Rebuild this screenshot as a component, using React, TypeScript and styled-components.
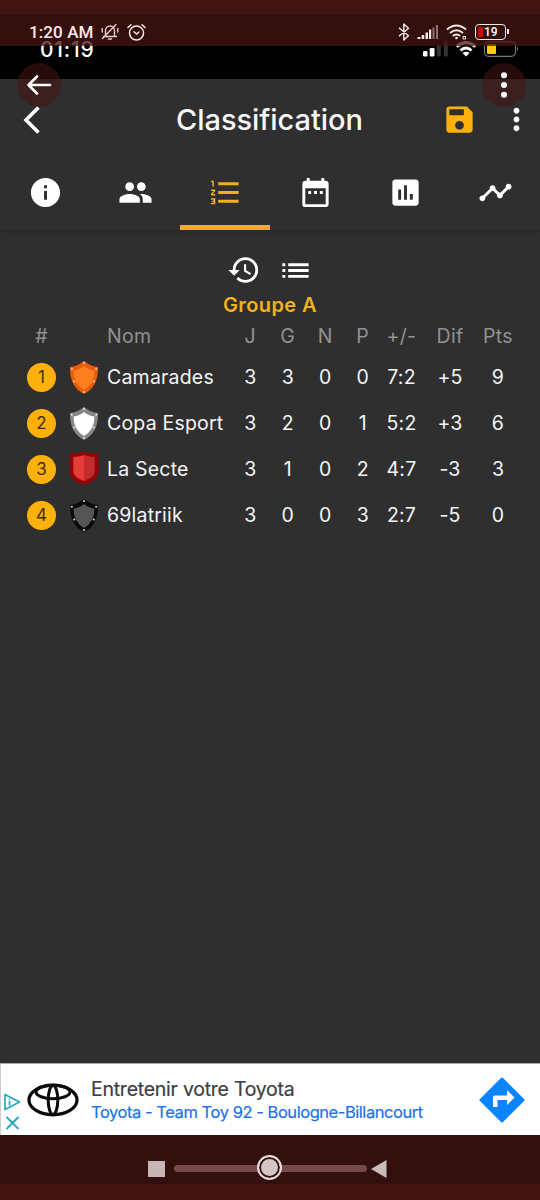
import React from 'react';
import styled, { createGlobalStyle } from 'styled-components';
import {
  MdInfo, MdGroup, MdFormatListNumbered, MdDateRange, MdAssessment, MdTimeline,
  MdHistory, MdList, MdMoreVert,
} from 'react-icons/md';

const amber = '#fdb10a';

const Global = createGlobalStyle`
  * { box-sizing: border-box; }
  body { margin: 0; background: #2f2f2f; }
  svg { display: block; flex: none; }
`;

const Screen = styled.div`
  position: relative;
  display: flex;
  flex-direction: column;
  width: 540px;
  height: 1200px;
  overflow: hidden;
  background: #2f2f2f;
  color: #fff;
  font-family: Inter, 'Liberation Sans', sans-serif;
`;

const InnerStatus = styled.div`
  display: flex;
  justify-content: space-between;
  height: 79px;
  flex: none;
  padding: 37px 21px 0 40px;
  background: #000;
`;
const InnerTime = styled.span`
  padding-top: 1px;
  font-size: 21px;
  line-height: 24px;
  font-weight: 500;
  letter-spacing: 0.8px;
`;
const InnerIcons = styled.div`
  display: flex;
  align-items: flex-start;
  padding-top: 4px;
`;

const SystemStatus = styled.div`
  position: absolute;
  inset: 0 0 auto 0;
  height: 46px;
  display: flex;
  align-items: center;
  justify-content: space-between;
  padding: 3px 31px 0 29px;
  border-top: 15px solid #421412;
  background: rgba(68, 20, 17, 0.75);
  background-clip: padding-box;
  color: #fbe9e7;
`;
const StatusGroup = styled.div<{ $gap: number }>`
  display: flex;
  align-items: center;
  gap: ${p => p.$gap}px;
`;
const Clock = styled.span`
  font: 500 17px/20px Roboto, sans-serif;
  letter-spacing: 0.1px;
`;

const FloatButton = styled.button<{ $side: 'left' | 'right' }>`
  position: absolute;
  top: 63px;
  ${p => (p.$side === 'left' ? 'left: 17px;' : 'right: 14px;')}
  width: 44px;
  height: 44px;
  padding: 0;
  border: 0;
  border-radius: 50%;
  display: flex;
  align-items: center;
  justify-content: center;
  background: rgba(70, 20, 18, 0.55);
  color: #fff;
`;

const AppBar = styled.header`
  display: grid;
  grid-template-columns: 90px 1fr 38px 73px;
  align-items: center;
  height: 81px;
  flex: none;
`;
const BackIcon = styled.div`
  padding-left: 21px;
`;
const Title = styled.h1`
  margin: 0;
  padding-left: 20px;
  text-align: center;
  font-size: 29px;
  line-height: 36px;
  font-weight: 500;
  letter-spacing: -0.05px;
  color: #f7f7f7;
`;
const SaveSlot = styled.div`
  color: ${amber};
  margin-left: 13px;
`;
const MoreSlot = styled.div`
  margin-left: 32px;
`;

const Tabs = styled.nav`
  display: grid;
  grid-template-columns: repeat(6, 90px);
  height: 71px;
  flex: none;
  border-bottom: 1px solid #292929;
  box-shadow: 0 1px 3px rgba(0, 0, 0, 0.12);
`;
const Tab = styled.div<{ $active?: boolean }>`
  display: flex;
  justify-content: center;
  padding: 15px 0 0;
  height: 70px;
  color: ${p => (p.$active ? '#f2b01e' : '#fff')};
  border-bottom: ${p => (p.$active ? '5px solid #f2ae1e' : '0')};
`;

const Tools = styled.div`
  display: flex;
  justify-content: center;
  gap: 17px;
  padding-top: 22px;
`;
const GroupTitle = styled.h2`
  margin: 5px 0 1px;
  text-align: center;
  font-size: 20px;
  line-height: 24px;
  font-weight: 600;
  letter-spacing: 0.4px;
  color: #f5b21c;
`;

const Line = styled.div<{ $head?: boolean }>`
  display: grid;
  grid-template-columns: 37px 47px 124.5px repeat(4, 37.5px) 40px 57px 39px;
  align-items: center;
  padding-left: 23px;
  height: ${p => (p.$head ? 36 : 46)}px;
  font-size: 19.5px;
  letter-spacing: ${p => (p.$head ? 0.3 : 0.2)}px;
  color: ${p => (p.$head ? '#929292' : '#f5f5f5')};
`;
const Cell = styled.span`
  display: flex;
  justify-content: center;
  white-space: nowrap;
`;
const Name = styled.span`
  white-space: nowrap;
`;
const Rank = styled.span`
  width: 29px;
  height: 29px;
  border-radius: 50%;
  display: flex;
  align-items: center;
  justify-content: center;
  background: ${amber};
  color: #3f3008;
  font-size: 17px;
  letter-spacing: 0;
`;

const Ad = styled.section`
  display: flex;
  align-items: center;
  height: 72px;
  flex: none;
  margin-top: auto;
  padding: 0 15px 0 3px;
  border-left: 1px solid #ccc;
  border-top: 1px solid #aaa;
  background: #fff;
`;
const AdMarks = styled.div`
  display: flex;
  flex-direction: column;
  gap: 5px;
  padding-top: 24px;
  width: 23px;
`;
const AdText = styled.div`
  flex: 1;
  padding-left: 12px;
  white-space: nowrap;
`;
const AdTitle = styled.div`
  font-size: 19.5px;
  line-height: 24px;
  letter-spacing: -0.25px;
  color: #3c4043;
  -webkit-text-stroke: 0.2px #3c4043;
`;
const AdLink = styled.div`
  font-size: 16.5px;
  line-height: 22px;
  letter-spacing: -0.45px;
  color: #1a73e8;
  -webkit-text-stroke: 0.2px #1a73e8;
`;

const NavBar = styled.footer`
  display: flex;
  align-items: center;
  height: 65px;
  flex: none;
  padding: 0 0 0 148px;
  border-bottom: 16px solid #421412;
  background: #330f0d;
`;
const NavSquare = styled.div`
  width: 17px;
  height: 16px;
  margin-top: 18px;
  background: #c6b7b6;
`;
const NavTrack = styled.div`
  display: flex;
  align-items: center;
  justify-content: center;
  width: 193px;
  height: 7px;
  margin: 18px 4px 0 9px;
  padding-right: 2px;
  border-radius: 4px;
  background: #744b49;
`;
const NavKnob = styled.div`
  width: 25px;
  height: 25px;
  margin-top: -2px;
  flex: none;
  border-radius: 50%;
  border: 2px solid #e6dcda;
  background: #d3c6c5;
  box-shadow: inset 0 0 0 2px #330f0d;
`;
const NavArrow = styled.div`
  margin-top: 18px;
`;

const BellOff = () => (
  <svg width="18" height="18" viewBox="0 0 18 18" fill="none" stroke="#e7cfcc" strokeWidth="1.4" strokeLinecap="round">
    <path d="M2.500 13.500h13M4.500 13V7.500a4.500 4.500 0 0 1 9 0V13M7.500 16h3M1.200 5.500v3.500M16.800 5.500v3.500M1.500 15.500L15 1.500" />
  </svg>
);
const Alarm = () => (
  <svg width="19" height="19" viewBox="0 0 19 19" fill="none" stroke="#fbe9e7" strokeWidth="1.500" strokeLinecap="round">
    <circle cx="9.500" cy="10" r="7" />
    <path d="M1 4.500L4 1.700M18 4.500L15 1.700M7 8.700L9.500 11L12 9" />
  </svg>
);
const Bluetooth = () => (
  <svg width="12" height="18" viewBox="0 0 12 18" fill="none" stroke="#fbe9e7" strokeWidth="1.400" strokeLinejoin="round">
    <path d="M1 4.800L10.500 12.800L5.800 17V1L10.500 5.200L1 13.200" />
  </svg>
);
const Signal = () => (
  <svg width="22" height="16" viewBox="0 0 22 16" fill="#fbe9e7">
    <path d="M0.500 13h3v2h-3zM4.700 11h2.500v4H4.700zM8.500 8.500h2.500V15H8.500zM12 5.500h2.200V15H12z" />
    <path d="M15.500 3.500h2V15h-2zM19 1h2v14h-2z" opacity=".45" />
  </svg>
);
const Wifi = () => (
  <svg width="22" height="17" viewBox="0 0 22 17" fill="none" stroke="#fbe9e7" strokeWidth="1.900">
    <path d="M1 5.500Q10.500-2.500 20 5.500M4 9Q10.500 3.500 17 9M6.800 12Q10.500 9 14.200 12" />
    <circle cx="10.500" cy="14" r="1.300" fill="#fbe9e7" stroke="none" />
    <path d="M17 12.500h2.500v2.500H17z" strokeWidth="1" />
  </svg>
);
const BatteryShell = styled.div`
  position: relative;
  display: flex;
  align-items: center;
  width: 31px;
  height: 16px;
  margin-right: 3px;
  padding-left: 2px;
  border: 1.5px solid #fbe9e7;
  border-radius: 4px;
  font: 500 12px/14px Roboto, sans-serif;
  color: #fff;
  &::after {
    content: '';
    position: absolute;
    right: -4px;
    top: 4px;
    width: 2px;
    height: 5px;
    background: #fbe9e7;
  }
`;
const BatteryFill = styled.div`
  width: 5px;
  height: 10px;
  border-radius: 1px;
  margin-right: 1px;
  background: #d80000;
`;

const InnerStatusIcons = () => (
  <svg width="98" height="18" viewBox="0 0 98 18">
    <g fill="#fff">
      <rect x="2" y="10" width="4.500" height="5.500" rx="1.200" />
      <rect x="8.700" y="7" width="4.800" height="8.500" rx="1.200" />
      <g opacity=".2">
        <rect x="15.800" y="4" width="4" height="11.500" rx="1" />
        <rect x="22.800" y="0" width="4" height="15.500" rx="1" />
      </g>
    </g>
    <g fill="none" stroke="#fff" strokeWidth="3">
      <path d="M35.500 5.500Q45-2.500 54.500 5.500M39.500 9.500Q45 4.500 50.500 9.500" />
      <path d="M41.500 12Q45 9.500 48.500 12L45 15.500z" fill="#fff" stroke="none" />
    </g>
    <rect x="63.500" y=".8" width="31" height="14.500" rx="4" fill="none" stroke="#777" strokeWidth="1.200" />
    <rect x="66" y="3" width="9" height="10" rx="1" fill="#fc0" />
    <path d="M96 5.500q2 2.500 0 5z" fill="#777" />
  </svg>
);

const SaveIcon = () => (
  <svg width="35" height="35" viewBox="0 0 24 24" fill="currentColor" fillRule="evenodd">
    <path d="M17 3H5c-1.100 0-2 .9-2 2v14c0 1.100.9 2 2 2h14c1.100 0 2-.9 2-2V7l-4-4zM12 13a3 3 0 1 0 .01 0zM5 5h10v4H5z" />
  </svg>
);

type Crest = { rim: string; fill: string; flat?: string; studs?: string };
const Shield = ({ rim, fill, flat, studs }: Crest) =>
  flat ? (
    <svg width="30" height="36" viewBox="0 0 30 36">
      <path d="M.5 2.500Q8 3 15 .5Q22 3 29.500 2.500V20Q29.500 30 15 34Q.5 30 .5 20z" fill={rim} />
      <path d="M4.300 6Q10 6 15 4V30Q4.300 26.500 4.300 20z" fill={fill} />
      <path d="M25.700 6Q20 6 15 4V30Q25.700 26.500 25.700 20z" fill={flat} />
    </svg>
  ) : (
    <svg width="30" height="35" viewBox="0 0 30 35">
      <path d="M15 .8Q20.500 6 29 7Q29.500 27 15 34Q.5 27 1 7Q9.500 6 15 .8z" fill={rim} />
      <path d="M15 6Q19.500 9.800 25.500 10.500Q25.500 24 15 30Q4.500 24 4.500 10.500Q10.500 9.800 15 6z" fill={fill} />
      <g fill={studs}>
        <circle cx="15" cy="3" r="1" /><circle cx="2.800" cy="8.700" r="1" /><circle cx="27.200" cy="8.700" r="1" />
        <circle cx="5.200" cy="21.500" r="1" /><circle cx="24.800" cy="21.500" r="1" /><circle cx="15" cy="32" r="1" />
      </g>
    </svg>
  );

const heads = ['J', 'G', 'N', 'P', '+/-', 'Dif', 'Pts'];
const teams: { name: string; crest: Crest; stats: string[] }[] = [
  { name: 'Camarades', crest: { rim: '#e85c0c', fill: '#ff7f1f', studs: '#ffd5b5' }, stats: ['3', '3', '0', '0', '7:2', '+5', '9'] },
  { name: 'Copa Esport', crest: { rim: '#858585', fill: '#fff', studs: '#e8e8e8' }, stats: ['3', '2', '0', '1', '5:2', '+3', '6'] },
  { name: 'La Secte', crest: { rim: '#900609', fill: '#e43c37', flat: '#c32b2d' }, stats: ['3', '1', '0', '2', '4:7', '-3', '3'] },
  { name: '69latriik', crest: { rim: '#090909', fill: '#555', studs: '#ddd' }, stats: ['3', '0', '0', '3', '2:7', '-5', '0'] },
];
const tabs = [MdInfo, MdGroup, MdFormatListNumbered, MdDateRange, MdAssessment, MdTimeline];

export default function App() {
  return (
    <Screen>
      <Global />
      <InnerStatus>
        <InnerTime>01:19</InnerTime>
        <InnerIcons><InnerStatusIcons /></InnerIcons>
      </InnerStatus>

      <AppBar>
        <BackIcon>
          <svg width="20" height="28" viewBox="0 0 20 28" fill="none" stroke="#fff" strokeWidth="3.600">
            <path d="M17.500 1.500L5 14L17.500 26.500" />
          </svg>
        </BackIcon>
        <Title>Classification</Title>
        <SaveSlot><SaveIcon /></SaveSlot>
        <MoreSlot><MdMoreVert size={35} /></MoreSlot>
      </AppBar>

      <Tabs>
        {tabs.map((Icon, i) => (
          <Tab key={i} $active={i === 2}><Icon size={35} /></Tab>
        ))}
      </Tabs>

      <Tools>
        <MdHistory size={34} />
        <MdList size={35} />
      </Tools>
      <GroupTitle>Groupe A</GroupTitle>

      <Line $head>
        <Cell>#</Cell><span /><Name>Nom</Name>
        {heads.map(h => <Cell key={h}>{h}</Cell>)}
      </Line>
      {teams.map((t, i) => (
        <Line key={t.name}>
          <Cell><Rank>{i + 1}</Rank></Cell>
          <Cell><Shield {...t.crest} /></Cell>
          <Name>{t.name}</Name>
          {t.stats.map((s, n) => <Cell key={n}>{s}</Cell>)}
        </Line>
      ))}

      <Ad>
        <AdMarks>
          <svg width="17" height="18" viewBox="0 0 17 18" fill="none" stroke="#27a9bd" strokeWidth="1.700">
            <path d="M1 1.500L15.500 9L1 16.500z" strokeLinejoin="round" />
            <path d="M5.500 8v4.500M5.500 5.500v1.300" />
          </svg>
          <svg width="16" height="14" viewBox="0 0 16 14" stroke="#27a9bd" strokeWidth="1.900">
            <path d="M2.500 1L14.500 13M14.500 1L2.500 13" />
          </svg>
        </AdMarks>
        <svg width="52" height="34" viewBox="0 0 52 34" fill="none" stroke="#0b0b0b" strokeWidth="3.300">
          <ellipse cx="26" cy="17" rx="24" ry="14.800" />
          <ellipse cx="26" cy="9" rx="17" ry="6.700" strokeWidth="3" />
          <ellipse cx="26" cy="17" rx="4.800" ry="14.500" strokeWidth="3" />
        </svg>
        <AdText>
          <AdTitle>Entretenir votre Toyota</AdTitle>
          <AdLink>Toyota - Team Toy 92 - Boulogne-Billancourt</AdLink>
        </AdText>
        <svg width="46" height="46" viewBox="0 0 46 46">
          <path d="M23 2L44 23L23 44L2 23z" fill="#0a84ff" stroke="#0a84ff" strokeWidth="3" strokeLinejoin="round" />
          <path d="M14 30V20.500q0-2 2-2h12v-5.500l7.500 7.500l-7.500 7.500v-5h-9.500v7z" fill="#fff" />
        </svg>
      </Ad>

      <NavBar>
        <NavSquare />
        <NavTrack><NavKnob /></NavTrack>
        <NavArrow>
          <svg width="16" height="18" viewBox="0 0 16 18" fill="#cbbcbb"><path d="M0 9L15.500 0V18z" /></svg>
        </NavArrow>
      </NavBar>

      <SystemStatus>
        <StatusGroup $gap={7.5}>
          <Clock>1:20 AM</Clock>
          <BellOff />
          <Alarm />
        </StatusGroup>
        <StatusGroup $gap={7}>
          <Bluetooth />
          <Signal />
          <Wifi />
          <BatteryShell><BatteryFill />19</BatteryShell>
        </StatusGroup>
      </SystemStatus>
      <FloatButton $side="left" aria-label="Retour">
        <svg width="26" height="22" viewBox="0 0 26 22" fill="none" stroke="#fff" strokeWidth="2.600" strokeLinecap="round" strokeLinejoin="round">
          <path d="M24 11H2.500M11 2.500L2.500 11L11 19.500" />
        </svg>
      </FloatButton>
      <FloatButton $side="right" aria-label="Menu">
        <svg width="8" height="28" viewBox="0 0 8 28" fill="#fff">
          <circle cx="4" cy="4.300" r="3" /><circle cx="4" cy="14" r="3" /><circle cx="4" cy="23.700" r="3" />
        </svg>
      </FloatButton>
    </Screen>
  );
}
